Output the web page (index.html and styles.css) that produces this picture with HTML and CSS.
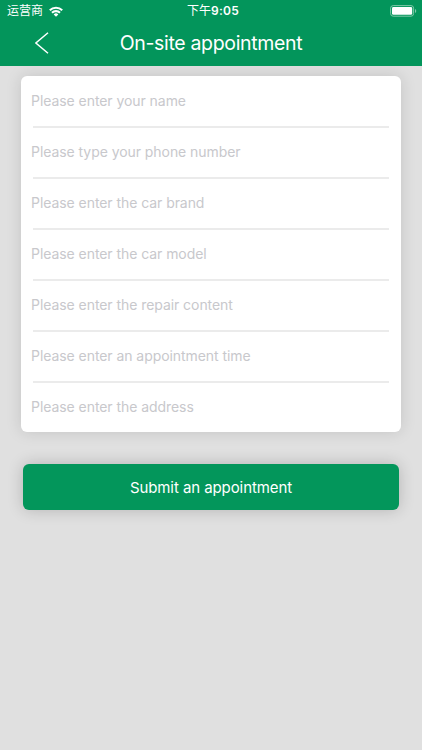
FILE: index.html
```html
<!DOCTYPE html>
<html lang="en">
<head>
<meta charset="utf-8">
<title>On-site appointment</title>
<link rel="stylesheet" href="styles.css">
</head>
<body>
<header class="header">
  <div class="status">
    <div class="carrier">
      <span>运营商</span>
      <svg class="wifi" width="14" height="11" viewBox="0 0 14 11" fill="none" stroke="#fff" stroke-width="2.1">
        <path d="M.8 4.2a8.9 8.9 0 0 1 12.4 0M3 6.8a5.7 5.7 0 0 1 8 0"/>
        <path d="M4.7 8.5a3.2 3.2 0 0 1 4.6 0L7 10.8z" fill="#fff" stroke="none"/>
      </svg>
    </div>
    <div class="time">下午<b>9:05</b></div>
    <svg class="battery" width="27" height="12" viewBox="0 0 27 12">
      <rect x=".6" y=".6" width="23" height="10.6" rx="2.6" fill="none" stroke="#7fc9a8"/>
      <rect x="2" y="2" width="20.2" height="7.8" rx="1.4" fill="#fff"/>
      <path d="M25 4v4c1.7-.7 1.7-3.3 0-4z" fill="#7fc9a8"/>
    </svg>
  </div>
  <div class="nav">
    <svg class="back" width="14" height="22" viewBox="0 0 14 22" fill="none" stroke="#fff" stroke-width="1.5"><path d="M13 .8.9 11 13 21.2"/></svg>
    <h1 class="title">On-site appointment</h1>
    <span></span>
  </div>
</header>
<main class="content">
  <form class="form">
    <div class="card">
      <div class="field">Please enter your name</div>
      <div class="field">Please type your phone number</div>
      <div class="field">Please enter the car brand</div>
      <div class="field">Please enter the car model</div>
      <div class="field">Please enter the repair content</div>
      <div class="field">Please enter an appointment time</div>
      <div class="field">Please enter the address</div>
    </div>
    <button class="submit" type="button">Submit an appointment</button>
  </form>
</main>
</body>
</html>
```
FILE: styles.css
```css
* {
  box-sizing: border-box;
}

body {
  margin: 0;
  min-height: 750px;
  background: #e0e0e0;
  font-family: Inter, "Noto Sans CJK SC", sans-serif;
}

.header {
  position: relative;
  z-index: 1;
  height: 66px;
  background: #03955b;
  color: #fff;
}

.status {
  display: grid;
  grid-template-columns: 1fr auto 1fr;
  align-items: center;
  height: 22px;
  padding: 0 5px 0 7px;
  font-size: 12px;
  line-height: 22px;
}

.carrier {
  display: flex;
  align-items: center;
  gap: 6px;
}

.time {
  padding-left: 2px;
}

.time b {
  font-weight: 600;
  letter-spacing: .25px;
}

.battery {
  justify-self: end;
}

.nav {
  display: grid;
  grid-template-columns: 1fr auto 1fr;
  align-items: center;
  height: 42px;
}

.back {
  margin-left: 35px;
}

.title {
  margin: 0 0 1px;
  font-size: 19.5px;
  line-height: 24px;
  font-weight: 400;
  letter-spacing: -.33px;
}

.content {
  padding: 10px 21px 0;
}

.card {
  height: 356px;
  border-radius: 6px;
  background: #fff;
  box-shadow: 0 0 16px rgba(0, 0, 0, .13);
}

.field {
  position: relative;
  height: 51px;
  padding-left: 10px;
  color: #c8c8cc;
  font-size: 14px;
  line-height: 50px;
  letter-spacing: -.06px;
}

.field:not(:last-child)::after {
  content: "";
  position: absolute;
  right: 12px;
  bottom: -1px;
  left: 12px;
  height: 2px;
  background: #ebebeb;
}

.submit {
  display: block;
  width: 376px;
  height: 46px;
  margin: 32.4px auto 0;
  padding: 0;
  border: 0;
  border-radius: 6px;
  background: #03965b;
  box-shadow: 0 0 16px rgba(0, 0, 0, .2);
  color: #fff;
  font-family: inherit;
  font-size: 15px;
  letter-spacing: -.08px;
}
```
